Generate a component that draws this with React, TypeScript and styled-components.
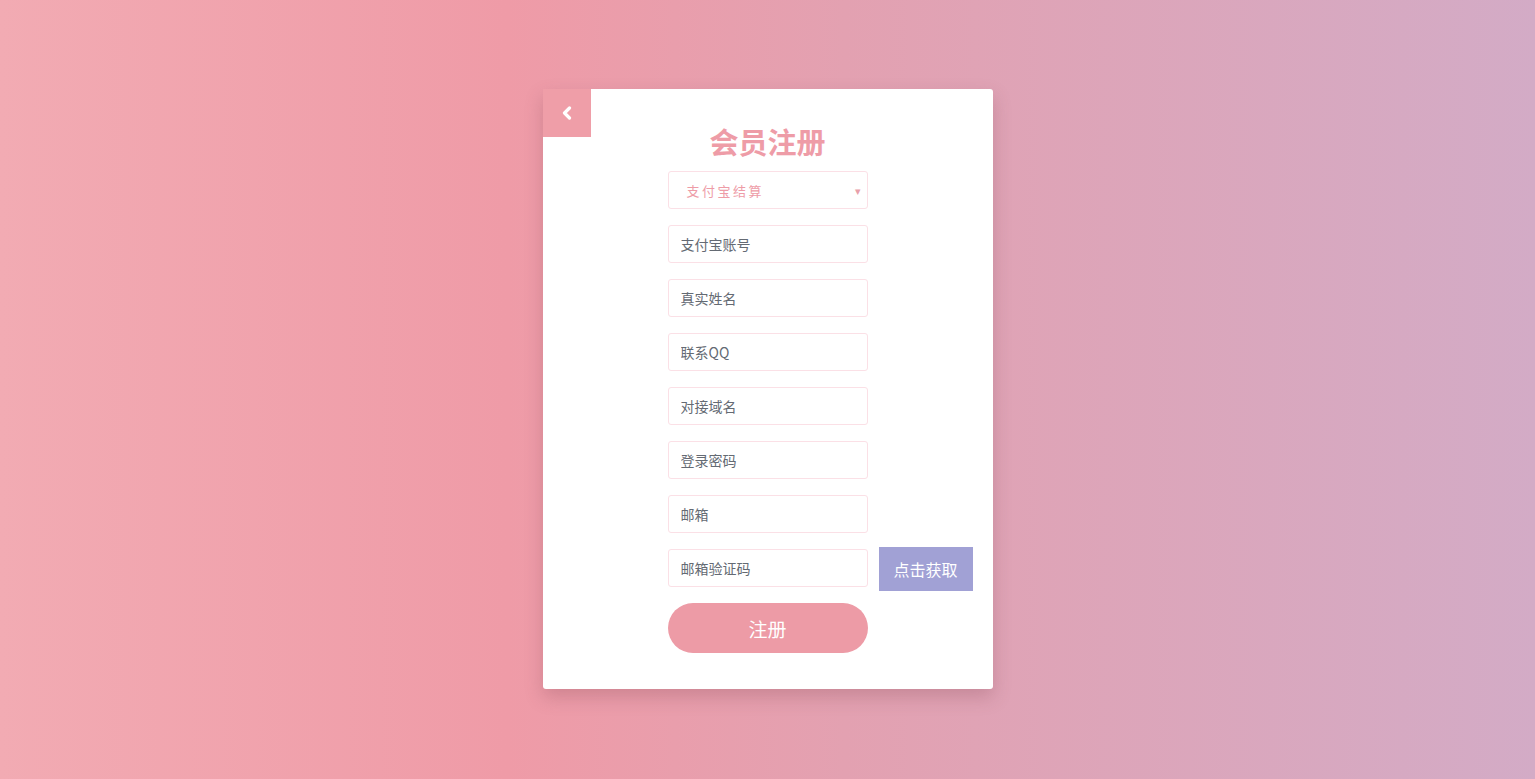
import { createGlobalStyle } from 'styled-components';
import styled from 'styled-components';

const GlobalStyle = createGlobalStyle`
  html, body {
    margin: 0;
    padding: 0;
    height: 100%;
  }
  body {
    font-family: 'Noto Sans CJK SC', 'Noto Sans', sans-serif;
  }
  #root {
    height: 100%;
  }
  * {
    box-sizing: border-box;
  }
`;

const fields = ['支付宝账号', '真实姓名', '联系QQ', '对接域名', '登录密码', '邮箱'];

const App = () => {
  return (
    <Page>
      <GlobalStyle />
      <Card>
        <BackButton aria-label="back">
          <svg width="12" height="14" viewBox="0 0 12 14">
            <path
              d="M8.5 2 L3.5 7 L8.5 12"
              fill="none"
              stroke="#fff"
              strokeWidth="3.2"
              strokeLinecap="round"
              strokeLinejoin="round"
            />
          </svg>
        </BackButton>
        <Title>会员注册</Title>
        <Form>
          <SelectBox>
            <span>支付宝结算</span>
            <Caret>▾</Caret>
          </SelectBox>
          {fields.map((field) => (
            <Input key={field} placeholder={field} />
          ))}
          <CodeRow>
            <Input placeholder="邮箱验证码" />
            <CodeButton>点击获取</CodeButton>
          </CodeRow>
          <SubmitButton>注册</SubmitButton>
        </Form>
      </Card>
    </Page>
  );
};

export default App;

const Page = styled.div`
  width: 100%;
  height: 779px;
  display: flex;
  justify-content: center;
  padding-top: 89px;
  background: linear-gradient(to right, #f2abb3 0%, #ef9ba7 33%, #e3a1b1 55%, #d3abc6 100%);
`;

const Card = styled.div`
  position: relative;
  width: 450px;
  height: 600px;
  background: #fff;
  border-radius: 3px;
  box-shadow: 0 8px 18px rgba(120, 60, 70, 0.25);
  padding-top: 31px;
  display: flex;
  flex-direction: column;
  align-items: center;
`;

const BackButton = styled.div`
  position: absolute;
  top: 0;
  left: 0;
  width: 48px;
  height: 48px;
  background: #ef9ea8;
  display: flex;
  align-items: center;
  justify-content: center;
  cursor: pointer;
`;

const Title = styled.h2`
  margin: 0 0 9px 0;
  height: 42px;
  line-height: 42px;
  font-size: 29px;
  font-weight: 700;
  color: #ee9ca7;
`;

const Form = styled.div`
  width: 200px;
  display: flex;
  flex-direction: column;
  gap: 16px;
`;

const SelectBox = styled.div`
  height: 38px;
  border: 1px solid #fbe0e6;
  border-radius: 3px;
  display: flex;
  align-items: center;
  justify-content: space-between;
  padding: 0 6px 0 18px;
  font-size: 13px;
  letter-spacing: 2.5px;
  color: #ee9ca7;
`;

const Caret = styled.span`
  font-size: 11px;
  color: #e8a0aa;
  letter-spacing: 0;
`;

const Input = styled.input`
  flex: 0 0 auto;
  width: 200px;
  height: 38px;
  border: 1px solid #fbe0e6;
  border-radius: 3px;
  padding: 0 12px;
  font-family: 'Noto Sans CJK SC', 'Noto Sans', sans-serif;
  font-size: 14px;
  outline: none;
  &::placeholder {
    color: #646a73;
  }
`;

const CodeRow = styled.div`
  height: 38px;
  display: flex;
  align-items: center;
  gap: 11px;
`;

const CodeButton = styled.div`
  flex-shrink: 0;
  width: 94px;
  height: 44px;
  margin-top: 1px;
  background: #a1a1d5;
  color: #fff;
  font-size: 16px;
  display: flex;
  align-items: center;
  justify-content: center;
  cursor: pointer;
`;

const SubmitButton = styled.button`
  height: 50px;
  border: none;
  border-radius: 25px;
  background: #ed9ba6;
  color: #fff;
  font-family: 'Noto Sans CJK SC', 'Noto Sans', sans-serif;
  font-size: 19px;
  cursor: pointer;
`;
